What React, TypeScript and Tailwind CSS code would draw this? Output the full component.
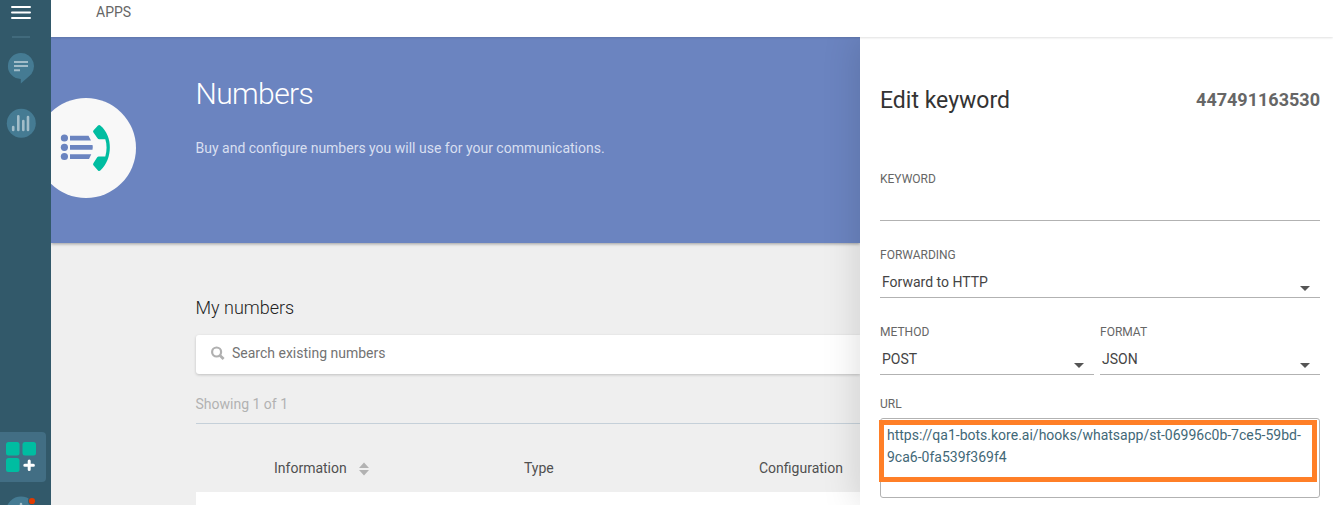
import React from "react";

function Sidebar() {
  return (
    <aside className="flex h-full w-[51px] shrink-0 flex-col bg-[#32596a]">
      <svg className="block shrink-0" width="51" height="144" viewBox="0 0 51 144">
        <g stroke="#fff" strokeWidth="2" strokeLinecap="round">
          <path d="M12 7H30M12 12.5H30M12 18H30" />
        </g>
        <path d="M12 37H30" stroke="#416a7c" strokeWidth="2" />
        <path d="M21 53a13 13 0 0 1 7.8 23.4L20.8 83.4v-4.4a13 13 0 0 1 0.2-26z" fill="#457b93" />
        <path d="M14 62H28M14 66H28M14 70.3H20" stroke="#a2bdc9" strokeWidth="2" />
        <circle cx="21.3" cy="123.3" r="14.5" fill="#457b93" />
        <path
          d="M13.2 127V130M18.3 116.4V130M23.3 121V130M28 117V130"
          stroke="#a2bdc9"
          strokeWidth="2.6"
          strokeLinecap="round"
        />
      </svg>
      <div className="mt-[288px] flex h-[50px] w-[46px] shrink-0 rounded-r bg-[#426e84]">
        <svg className="block" width="46" height="50" viewBox="0 0 46 50">
          <g fill="#00bda1">
            <rect x="6" y="10" width="13.5" height="13.5" rx="2.5" />
            <rect x="22.5" y="10" width="13.5" height="13.5" rx="2.5" />
            <rect x="6" y="26" width="13.5" height="14" rx="2.5" />
          </g>
          <path d="M24.8 33.3H33.4M29.2 29V37.6" stroke="#fff" strokeWidth="3" strokeLinecap="round" />
        </svg>
      </div>
      <svg className="block shrink-0" width="51" height="23" viewBox="0 0 51 23">
        <circle cx="21" cy="29.5" r="15" fill="#457b93" />
        <path d="M21 22V23" stroke="#a2bdc9" strokeWidth="2.5" strokeLinecap="round" />
        <circle cx="32" cy="19" r="4" fill="#32596a" />
        <circle cx="32" cy="19" r="3.1" fill="#e03a00" />
      </svg>
    </aside>
  );
}

function Hero() {
  return (
    <section className="relative flex h-[206px] overflow-hidden bg-[#6b84c0] shadow-[0_1px_3px_rgba(0,0,0,0.35)]">
      <div className="-ml-[15px] mt-[61px] size-[100px] shrink-0 rounded-full bg-[#f8f8f8]">
        <svg width="100" height="100" viewBox="0 0 100 100">
          <g fill="#6b84c0">
            <circle cx="28.4" cy="40" r="3.6" />
            <circle cx="28.4" cy="49.3" r="3.6" />
            <circle cx="28.4" cy="58.5" r="3.6" />
            <path d="M34 37.8H52.5L55 42.4H34zM34 47H56.5Q57.2 49.3 56.5 51.7H34zM34 56.3H55.3L53 61H34z" />
          </g>
          <path
            d="M57.4 32.4L62 27.6Q63.2 26.5 64.6 27.8C77 38 77 61 64.6 72.2Q63.2 73.5 62 72.4L57.4 67.2Q56.7 66.2 57.4 65.2L61.2 59.2Q61.8 58.4 62.8 58.4H69.3C71 52.5 71 46.5 69.3 41.2H63.2Q62.2 41.2 61.5 40.2L57.3 34.2Q56.7 33.3 57.4 32.4Z"
            fill="#00bda1"
          />
        </svg>
      </div>
      <div className="ml-[59.5px] pt-[39px]">
        <h1 className="text-[30px] font-light leading-9 tracking-[-0.6px] text-white">Numbers</h1>
        <p className="mt-[26px] text-sm leading-5 text-[#d8dff0]">
          Buy and configure numbers you will use for your communications.
        </p>
      </div>
    </section>
  );
}

function NumbersList() {
  return (
    <section className="pl-[144.5px]">
      <h2 className="mt-[53px] text-lg font-light leading-6 text-[#222]">My numbers</h2>
      <div className="mt-[15px] flex h-[39px] items-center rounded-l-[3px] bg-white pb-[3px] pl-[15px] shadow-[0_1px_3px_rgba(0,0,0,0.2)]">
        <svg width="14" height="14" viewBox="0 0 14 14" fill="none" stroke="#b0b0b0">
          <circle cx="5.6" cy="6" r="4.5" strokeWidth="2.2" />
          <path d="M9 9.4L12.6 13" strokeWidth="2.8" />
        </svg>
        <span className="ml-[7.5px] text-sm leading-5 text-[#737373]">Search existing numbers</span>
      </div>
      <div className="flex h-[50px] items-center border-b border-[#c5d0d9] pt-[10px] text-sm leading-5 text-[#b2b2b2]">
        Showing 1 of 1
      </div>
      <div className="flex h-[68px] items-center pt-[20px] text-sm leading-5 text-[#505050]">
        <div className="flex w-[328.5px] items-center pl-[78.5px]">
          Information
          <svg className="ml-3 mt-[2px]" width="10" height="14" viewBox="0 0 10 14" fill="#b2b2b2">
            <path d="M5 0.5L10 6H0zM0 8H10L5 13.5z" />
          </svg>
        </div>
        <div className="w-[235px]">Type</div>
        <div>Configuration</div>
      </div>
      <div className="h-[13px] bg-white" />
    </section>
  );
}

function Label({ children }: { children: React.ReactNode }) {
  return <div className="text-xs leading-4 text-[#666]">{children}</div>;
}

function SelectField({ label, value, className }: { label: string; value: string; className: string }) {
  return (
    <div className={className}>
      <Label>{label}</Label>
      <div className="flex h-[35px] items-start justify-between border-b border-[#b2b2b2] pl-0.5 pr-[10px] pt-[9px] text-sm leading-5 text-[#444]">
        {value}
        <svg className="mt-[14px]" width="10" height="5" viewBox="0 0 10 5" fill="#555">
          <path d="M0 0H10L5 5z" />
        </svg>
      </div>
    </div>
  );
}

function KeywordDrawer() {
  return (
    <aside className="relative z-10 w-[473px] shrink-0 bg-white pl-5 pr-[13px] shadow-[0_0_36px_rgba(0,0,0,0.15)]">
      <div className="flex h-[63px] items-end justify-between pt-[48px]">
        <h2 className="-mb-[17px] text-[23px] leading-8 text-[#333]">Edit keyword</h2>
        <span className="-mb-[12px] text-lg font-bold leading-6 text-[#666]">447491163530</span>
      </div>
      <div className="mt-[71px] h-[50px] border-b border-[#b2b2b2]">
        <Label>KEYWORD</Label>
      </div>
      <SelectField label="FORWARDING" value="Forward to HTTP" className="mt-[26px]" />
      <div className="mt-[26px] flex gap-[6px]">
        <SelectField label="METHOD" value="POST" className="w-[214px]" />
        <SelectField label="FORMAT" value="JSON" className="w-[220px]" />
      </div>
      <div className="mt-[21px]">
        <Label>URL</Label>
        <div className="relative mt-[6px] h-[80px] rounded-[3px] border border-[#b2b2b2] px-[6px] pt-[5px] text-sm leading-[22px] text-[#426877]">
          https://qa1-bots.kore.ai/hooks/whatsapp/st-06996c0b-7ce5-59bd-
          <br />
          9ca6-0fa539f369f4
          <div className="absolute -left-[2px] top-[1px] h-[62px] w-[438px] border-[5px] border-[#ff7f27]" />
        </div>
      </div>
    </aside>
  );
}

export default function App() {
  return (
    <div className="flex h-[505px] w-[1333px] overflow-hidden bg-[#efefef] font-['Roboto',sans-serif]">
      <Sidebar />
      <div className="flex w-[1282px] flex-col overflow-hidden">
        <header className="relative z-20 h-[37px] shrink-0 bg-white pl-[45px] pt-[2px] text-sm leading-5 text-[#666] shadow-[0_1px_2px_rgba(0,0,0,0.12)]">
          APPS
        </header>
        <div className="flex h-[468px]">
          <main className="w-[809px] shrink-0">
            <Hero />
            <NumbersList />
          </main>
          <KeywordDrawer />
        </div>
      </div>
    </div>
  );
}
